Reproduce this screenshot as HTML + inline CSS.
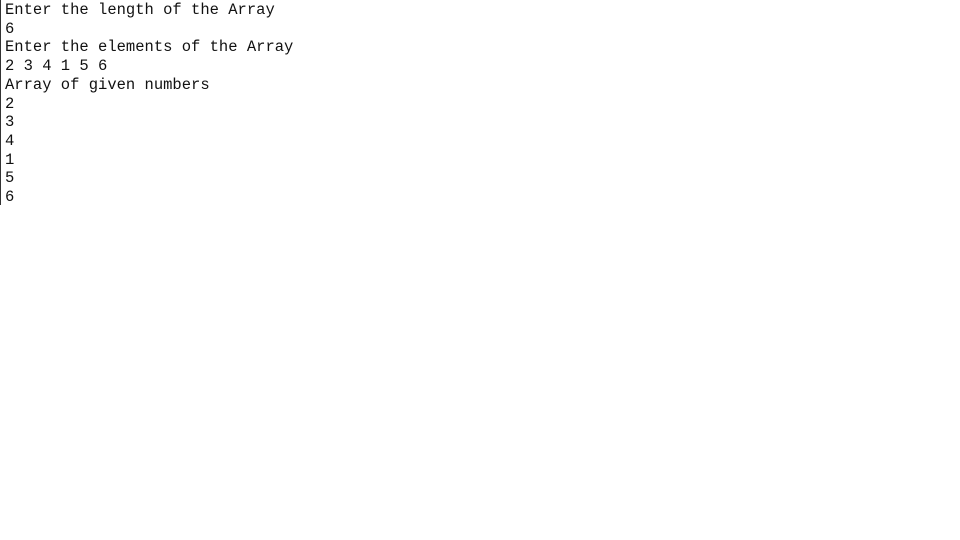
<!DOCTYPE html>
<html><head><meta charset="utf-8"><style>
html,body{margin:0;padding:0;background:#fff;width:960px;height:540px;overflow:hidden}
.b{position:absolute;left:0;top:0;width:1px;height:205px;background:#333}
pre{position:absolute;left:5px;top:1px;margin:0;font-family:"Liberation Mono",monospace;font-size:15.5px;line-height:18.7px;color:#111}
</style></head><body><div class="b"></div><pre>Enter the length of the Array
6
Enter the elements of the Array
2 3 4 1 5 6
Array of given numbers
2
3
4
1
5
6</pre></body></html>
